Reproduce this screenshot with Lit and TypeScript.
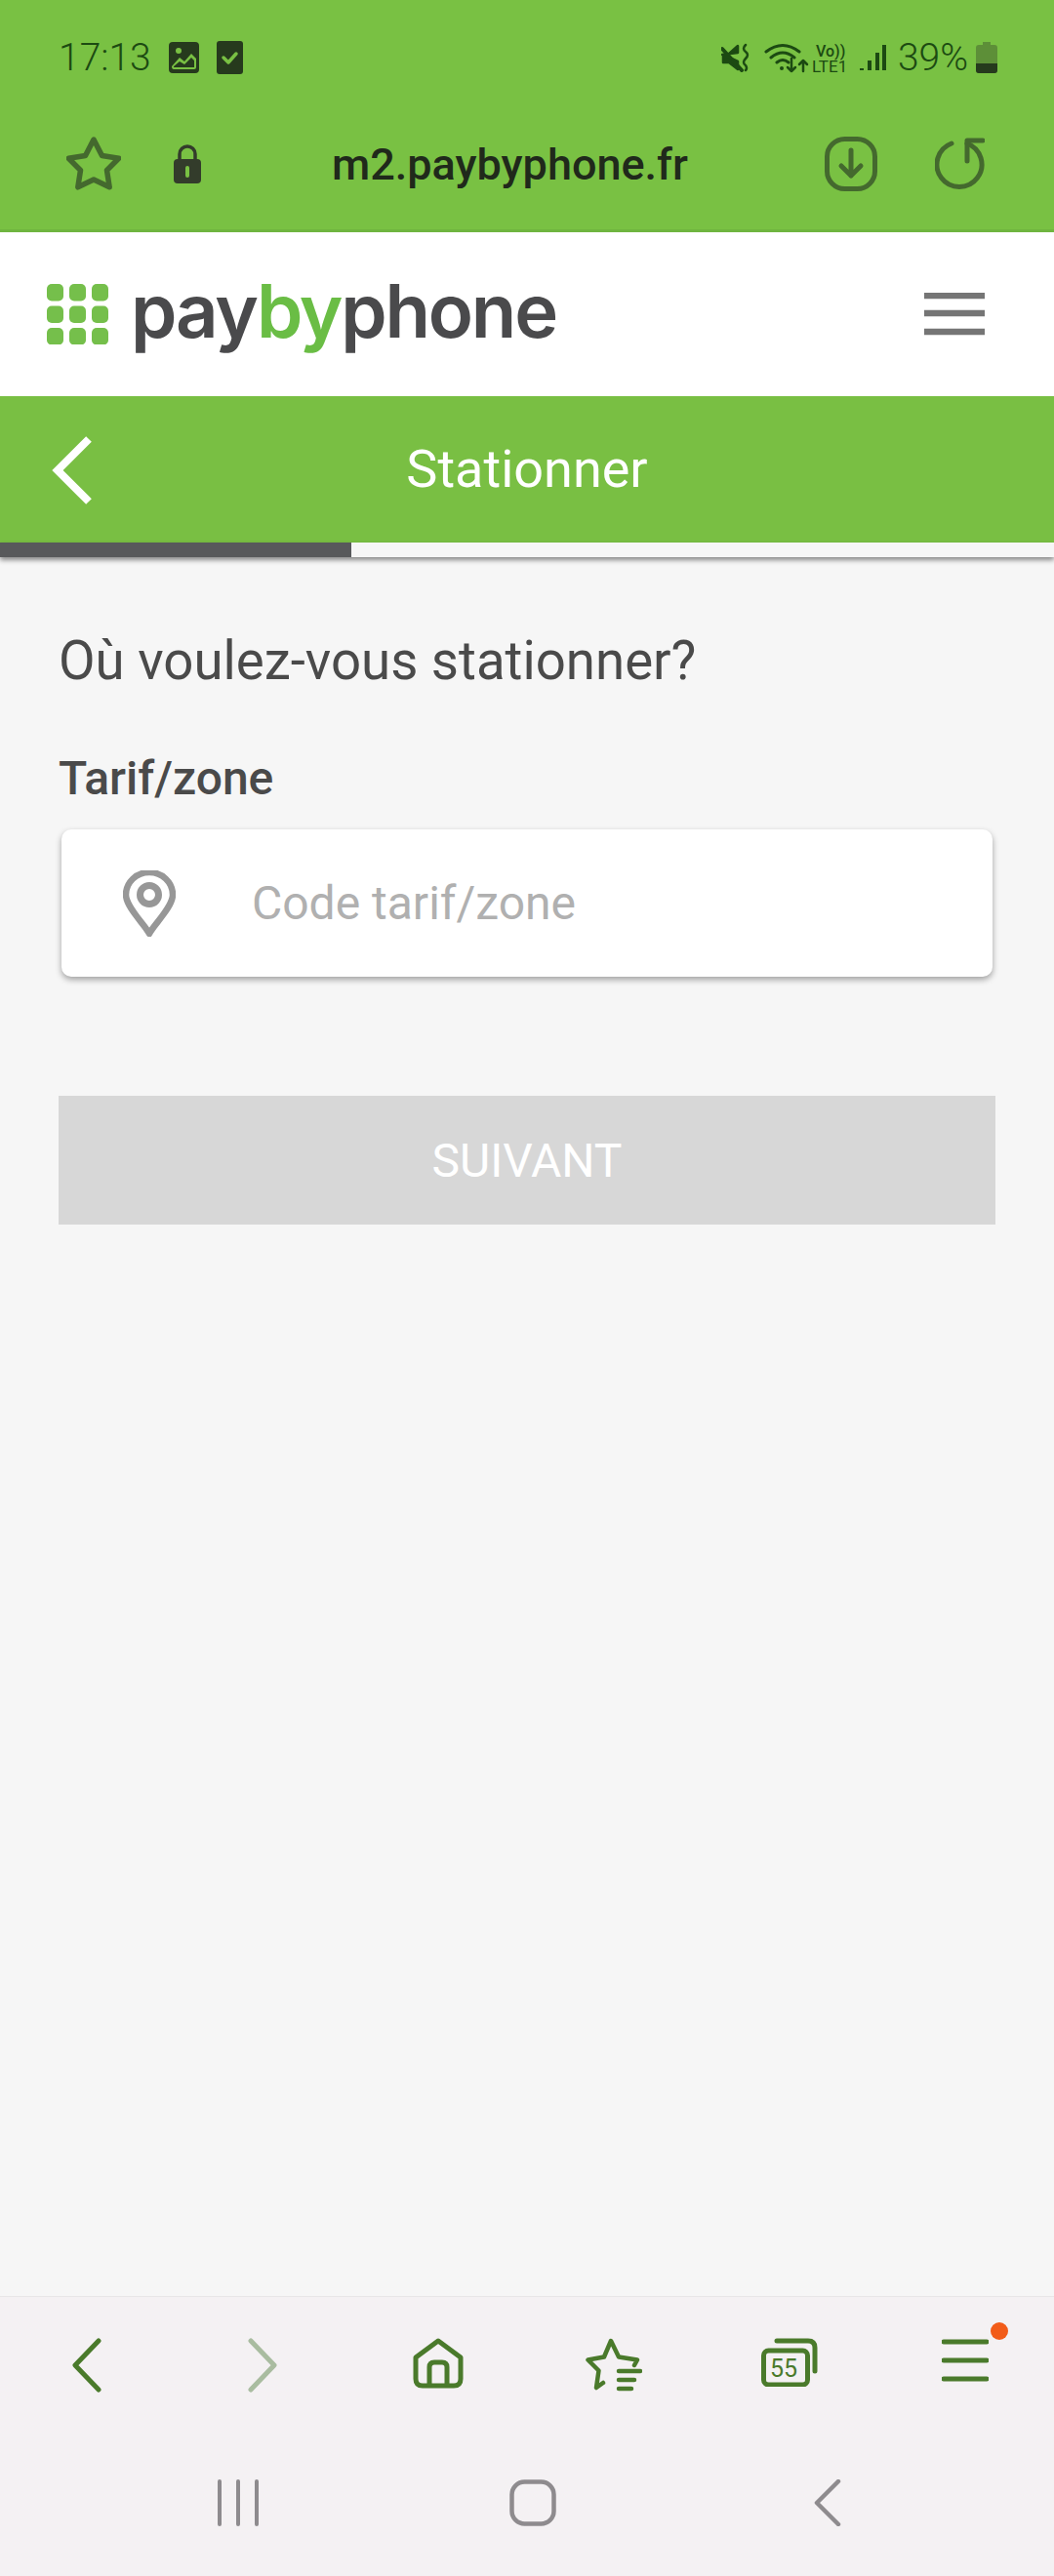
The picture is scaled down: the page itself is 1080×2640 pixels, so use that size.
import { LitElement, html, css, svg } from 'lit';
import { customElement } from 'lit/decorators.js';

const STAR = '28,4 36.5,20.5 53.7,23.2 41.5,35.5 44.2,52.8 28,45 11.8,52.8 14.5,35.5 2.3,23.2 19.5,20.5';

@customElement('app-root')
export class AppRoot extends LitElement {
  static styles = css`
    :host {
      display: block;
      width: 1080px;
      height: 2640px;
      font-family: Roboto, 'Noto Sans', sans-serif;
      background: #f6f6f6;
    }
    svg {
      display: block;
      flex: none;
    }
    .page {
      display: flex;
      flex-direction: column;
      height: 2640px;
    }
    .top {
      height: 235px;
      background: #79c143;
      border-bottom: 3px solid #6fb53f;
      display: flex;
      flex-direction: column;
    }
    .status {
      height: 42px;
      margin-top: 38px;
      padding: 0 58px 0 60px;
      display: flex;
      align-items: center;
      color: #1c4a12;
      font-size: 39px;
      font-weight: 300;
    }
    .time {
      margin-right: 18px;
    }
    .spacer {
      flex: 1;
    }
    .pct {
      margin: 0 8px 0 12px;
    }
    .urlbar {
      height: 60px;
      margin-top: 58px;
      padding: 0 71px 0 68px;
      display: flex;
      align-items: center;
    }
    .url {
      margin-left: 134px;
      font-size: 45px;
      font-weight: 500;
      color: #20291b;
    }
    .brand {
      height: 168px;
      background: #fff;
      display: flex;
      align-items: center;
      justify-content: space-between;
      padding: 0 70px 0 48px;
    }
    .logo {
      display: flex;
      align-items: center;
      gap: 23px;
    }
    .wordmark {
      font-family: Inter, sans-serif;
      font-size: 76px;
      font-weight: 600;
      letter-spacing: -2.2px;
      color: #4a4a4c;
      line-height: 1;
      padding-bottom: 8px;
    }
    .wordmark span {
      color: #6abd45;
    }
    .title {
      height: 150px;
      background: #79bf43;
      display: flex;
      align-items: center;
      justify-content: center;
      position: relative;
      color: #fff;
      font-size: 54px;
    }
    .title span {
      margin-top: -2px;
    }
    .title svg {
      position: absolute;
      left: 53px;
      top: 40px;
    }
    .progress {
      height: 15px;
      background: #f6f6f6;
      box-shadow: 0 3px 5px rgba(0, 0, 0, 0.45);
      position: relative;
    }
    .progress div {
      width: 360px;
      height: 100%;
      background: #58595b;
    }
    .content {
      flex: 1;
      padding: 0 60px;
    }
    h1 {
      margin: 74px 0 0;
      font-size: 54.6px;
      font-weight: 400;
      line-height: 64px;
      color: #4a4a4a;
    }
    label {
      display: block;
      margin-top: 63px;
      font-size: 48px;
      font-weight: 500;
      line-height: 52px;
      color: #4a4a4a;
    }
    .field {
      margin: 26px 3px 0;
      height: 151px;
      background: #fff;
      border-radius: 10px;
      box-shadow: 0 3px 6px rgba(0, 0, 0, 0.35);
      display: flex;
      align-items: center;
      padding-left: 63px;
      gap: 78px;
      font-size: 48px;
      color: #b0b0b0;
    }
    .next {
      margin-top: 122px;
      height: 132px;
      background: #d7d7d7;
      color: #fff;
      font-size: 48px;
      display: flex;
      align-items: center;
      justify-content: center;
    }
    .bottom {
      height: 286px;
      background: #f4f1f3;
      border-top: 1px solid #e8e6e7;
    }
    .tools {
      height: 140px;
      display: grid;
      grid-template-columns: repeat(6, 180px);
      padding-top: 42px;
      box-sizing: border-box;
      justify-items: center;
      margin-left: -1px;
    }
    .menu {
      position: relative;
    }
    .dot {
      position: absolute;
      left: 50px;
      top: -16px;
      width: 18px;
      height: 18px;
      border-radius: 50%;
      background: #f25c19;
    }
    .sys {
      display: grid;
      grid-template-columns: repeat(3, 302px);
      padding: 47px 0 0 93px;
      justify-items: center;
    }
  `;

  private icon(w: number, h: number, body: unknown) {
    return html`<svg width=${w} height=${h} viewBox="0 0 ${w} ${h}" fill="none" stroke-linecap="round" stroke-linejoin="round">${body}</svg>`;
  }

  private statusIcons() {
    const c = '#1c4a12';
    return html`
      ${this.icon(30, 30, svg`
        <path d="M1 6 L21 28" stroke=${c} stroke-width="4"/>
        <path d="M1 12 H7 L17 3 V10 Z M2 12 V20 H8 L17 27 V19 Z" fill=${c} stroke=${c} stroke-width="2.5"/>
        <path d="M25 2 q-4 4 0 7 q4 3 0 7 q-4 4 0 7 q2 3 0 5" stroke=${c} stroke-width="2.5"/>
      `)}
      <div style="width:14px"></div>
      ${this.icon(46, 32, svg`
        <path d="M2 10 Q19 -3 36 10 M7 16 Q19 6 31 16 M13 21 Q19 16 25 21" stroke=${c} stroke-width="3"/>
        <circle cx="18" cy="27" r="2" fill=${c}/>
        <path d="M28 17 V30 M24 26 L28 30 L32 26 M40 30 V19 M36 23 L40 19 L44 23" stroke=${c} stroke-width="2.5"/>
      `)}
      <div style="width:2px"></div>
      ${this.icon(42, 38, svg`
        <text x="5" y="18" font-family="Roboto" font-size="16" font-weight="500" fill=${c}>Vo))</text>
        <text x="1" y="34" font-family="Roboto" font-size="17" font-weight="400" fill=${c}>LTE1</text>
      `)}
      <div style="width:7px"></div>
      ${this.icon(28, 30, svg`
        <path d="M3 26 V28 M11 18 V28 M19 10 V28 M26 2 V28" stroke=${c} stroke-width="4" stroke-linecap="butt"/>
      `)}
    `;
  }

  render() {
    const g = '#44692e';
    const nav = '#4a7a2b';
    const sys = '#8e8b8e';
    return html`
      <div class="page">
        <div class="top">
          <div class="status">
            <span class="time">17:13</span>
            ${this.icon(31, 32, svg`
              <rect x="0" y="0" width="31" height="32" rx="4" fill="#263a1d"/>
              <circle cx="10" cy="9" r="3" fill="#79c143"/>
              <path d="M3 25 L11 16 L16 20 L23 12 L28 17 V26 Q28 28 26 28 H5 Q3 28 3 25 Z" fill="#79c143"/>
              <path d="M5 25 L11 20 L16 23 L23 16 L26 19 V26 H5 Z" fill="#263a1d"/>
            `)}
            <div style="width:18px"></div>
            ${this.icon(27, 34, svg`
              <rect width="27" height="34" rx="3" fill="#263a1d"/>
              <path d="M7 17 L12 22 L20 13" stroke="#79c143" stroke-width="3.5"/>
            `)}
            <div class="spacer"></div>
            ${this.statusIcons()}
            <span class="pct">39%</span>
            ${this.icon(22, 32, svg`
              <path d="M7 0 H15 V3 H19 Q22 3 22 6 V29 Q22 32 19 32 H3 Q0 32 0 29 V6 Q0 3 3 3 H7 Z" fill="#5d8f38"/>
              <path d="M0 22 H22 V29 Q22 32 19 32 H3 Q0 32 0 29 Z" fill="#263a1d"/>
            `)}
          </div>
          <div class="urlbar">
            ${this.icon(56, 58, svg`<polygon points=${STAR} stroke=${g} stroke-width="5.5"/>`)}
            <div style="width:54px"></div>
            ${this.icon(28, 40, svg`
              <path d="M6 18 V10 A8 8 0 0 1 22 10 V18" stroke="#333c2b" stroke-width="3.5"/>
              <rect x="0" y="15" width="28" height="25" rx="4" fill="#333c2b"/>
              <path d="M14 24 V32" stroke="#79c143" stroke-width="4"/>
            `)}
            <span class="url">m2.paybyphone.fr</span>
            <div class="spacer"></div>
            ${this.icon(54, 56, svg`
              <rect x="2.5" y="2.5" width="49" height="51" rx="18" stroke=${g} stroke-width="5"/>
              <path d="M27 14 V40 M17 30 L27 40 L37 30" stroke=${g} stroke-width="5"/>
            `)}
            <div style="width:59px"></div>
            ${this.icon(51, 54, svg`
              <path d="M17 6 A23 23 0 1 0 33 6" stroke=${g} stroke-width="5"/>
              <path d="M33 24 V3 H49" stroke=${g} stroke-width="5"/>
            `)}
          </div>
        </div>

        <div class="brand">
          <div class="logo">
            <svg width="63" height="62" viewBox="0 0 63 62">
              ${[0, 1, 2].flatMap((r) =>
                [0, 1, 2].map(
                  (c) => svg`<rect x=${c * 23} y=${r * 22.5} width="17" height="17.5" rx="5" fill="#75bf4b"/>`,
                ),
              )}
            </svg>
            <div class="wordmark">pay<span>by</span>phone</div>
          </div>
          ${this.icon(64, 44, svg`
            <path d="M1 3 H63 M1 21 H63 M1 40 H63" stroke="#757575" stroke-width="6.5" stroke-linecap="butt"/>
          `)}
        </div>

        <div class="title">
          ${this.icon(44, 72, svg`<path d="M38 4 L6 36 L38 68" stroke="#fff" stroke-width="8" stroke-linecap="butt" stroke-linejoin="miter"/>`)}
          <span>Stationner</span>
        </div>
        <div class="progress"><div></div></div>

        <div class="content">
          <h1>Où voulez-vous stationner?</h1>
          <label>Tarif/zone</label>
          <div class="field">
            ${this.icon(54, 68, svg`
              <path d="M27 65 C23 56 3 38 3 25 A24 23 0 0 1 51 25 C51 38 31 56 27 65 Z" stroke="#979797" stroke-width="6.5"/>
              <circle cx="27" cy="25" r="9.5" stroke="#979797" stroke-width="7"/>
            `)}
            <span>Code tarif/zone</span>
          </div>
          <div class="next">SUIVANT</div>
        </div>

        <div class="bottom">
          <div class="tools">
            ${this.icon(32, 56, svg`<path d="M28 3 L4 28 L28 53" stroke=${nav} stroke-width="5"/>`)}
            ${this.icon(32, 56, svg`<path d="M4 3 L28 28 L4 53" stroke="#a9bca0" stroke-width="5"/>`)}
            ${this.icon(52, 52, svg`
              <path d="M3 20 L26 3 L49 20 V42 Q49 49 42 49 H10 Q3 49 3 42 Z" stroke=${nav} stroke-width="5"/>
              <path d="M17 48 V30 Q17 25 22 25 H30 Q35 25 35 30 V48" stroke=${nav} stroke-width="5"/>
            `)}
            ${this.icon(58, 56, svg`
              <path d="M18 46 L11 51 L13.5 33.5 L2.5 22.5 L19 19.5 L26 3 L34 19.5 L53 22.5 L50 28" stroke=${nav} stroke-width="4.5"/>
              <path d="M34 34 H56 M34 43 H50 M34 52 H47" stroke=${nav} stroke-width="4.5"/>
            `)}
            ${this.icon(58, 50, svg`
              <rect x="2.5" y="13" width="45" height="35" rx="5" stroke=${nav} stroke-width="5"/>
              <path d="M16 3 H48 Q55 3 55 10 V34" stroke=${nav} stroke-width="5"/>
              <text x="9" y="40" font-family="Roboto" font-size="25" fill=${nav}>55</text>
            `)}
            <div class="menu">
              ${this.icon(48, 46, svg`<path d="M2 4 H46 M2 23 H46 M2 42 H46" stroke=${nav} stroke-width="5"/>`)}
              <div class="dot"></div>
            </div>
          </div>
          <div class="sys">
            ${this.icon(44, 48, svg`<path d="M3 2 V46 M22 2 V46 M41 2 V46" stroke=${sys} stroke-width="4"/>`)}
            ${this.icon(48, 48, svg`<rect x="2.5" y="2.5" width="43" height="43" rx="13" stroke=${sys} stroke-width="4.5"/>`)}
            ${this.icon(28, 48, svg`<path d="M25 2 L3 24 L25 46" stroke=${sys} stroke-width="4.5"/>`)}
          </div>
        </div>
      </div>
    `;
  }
}
